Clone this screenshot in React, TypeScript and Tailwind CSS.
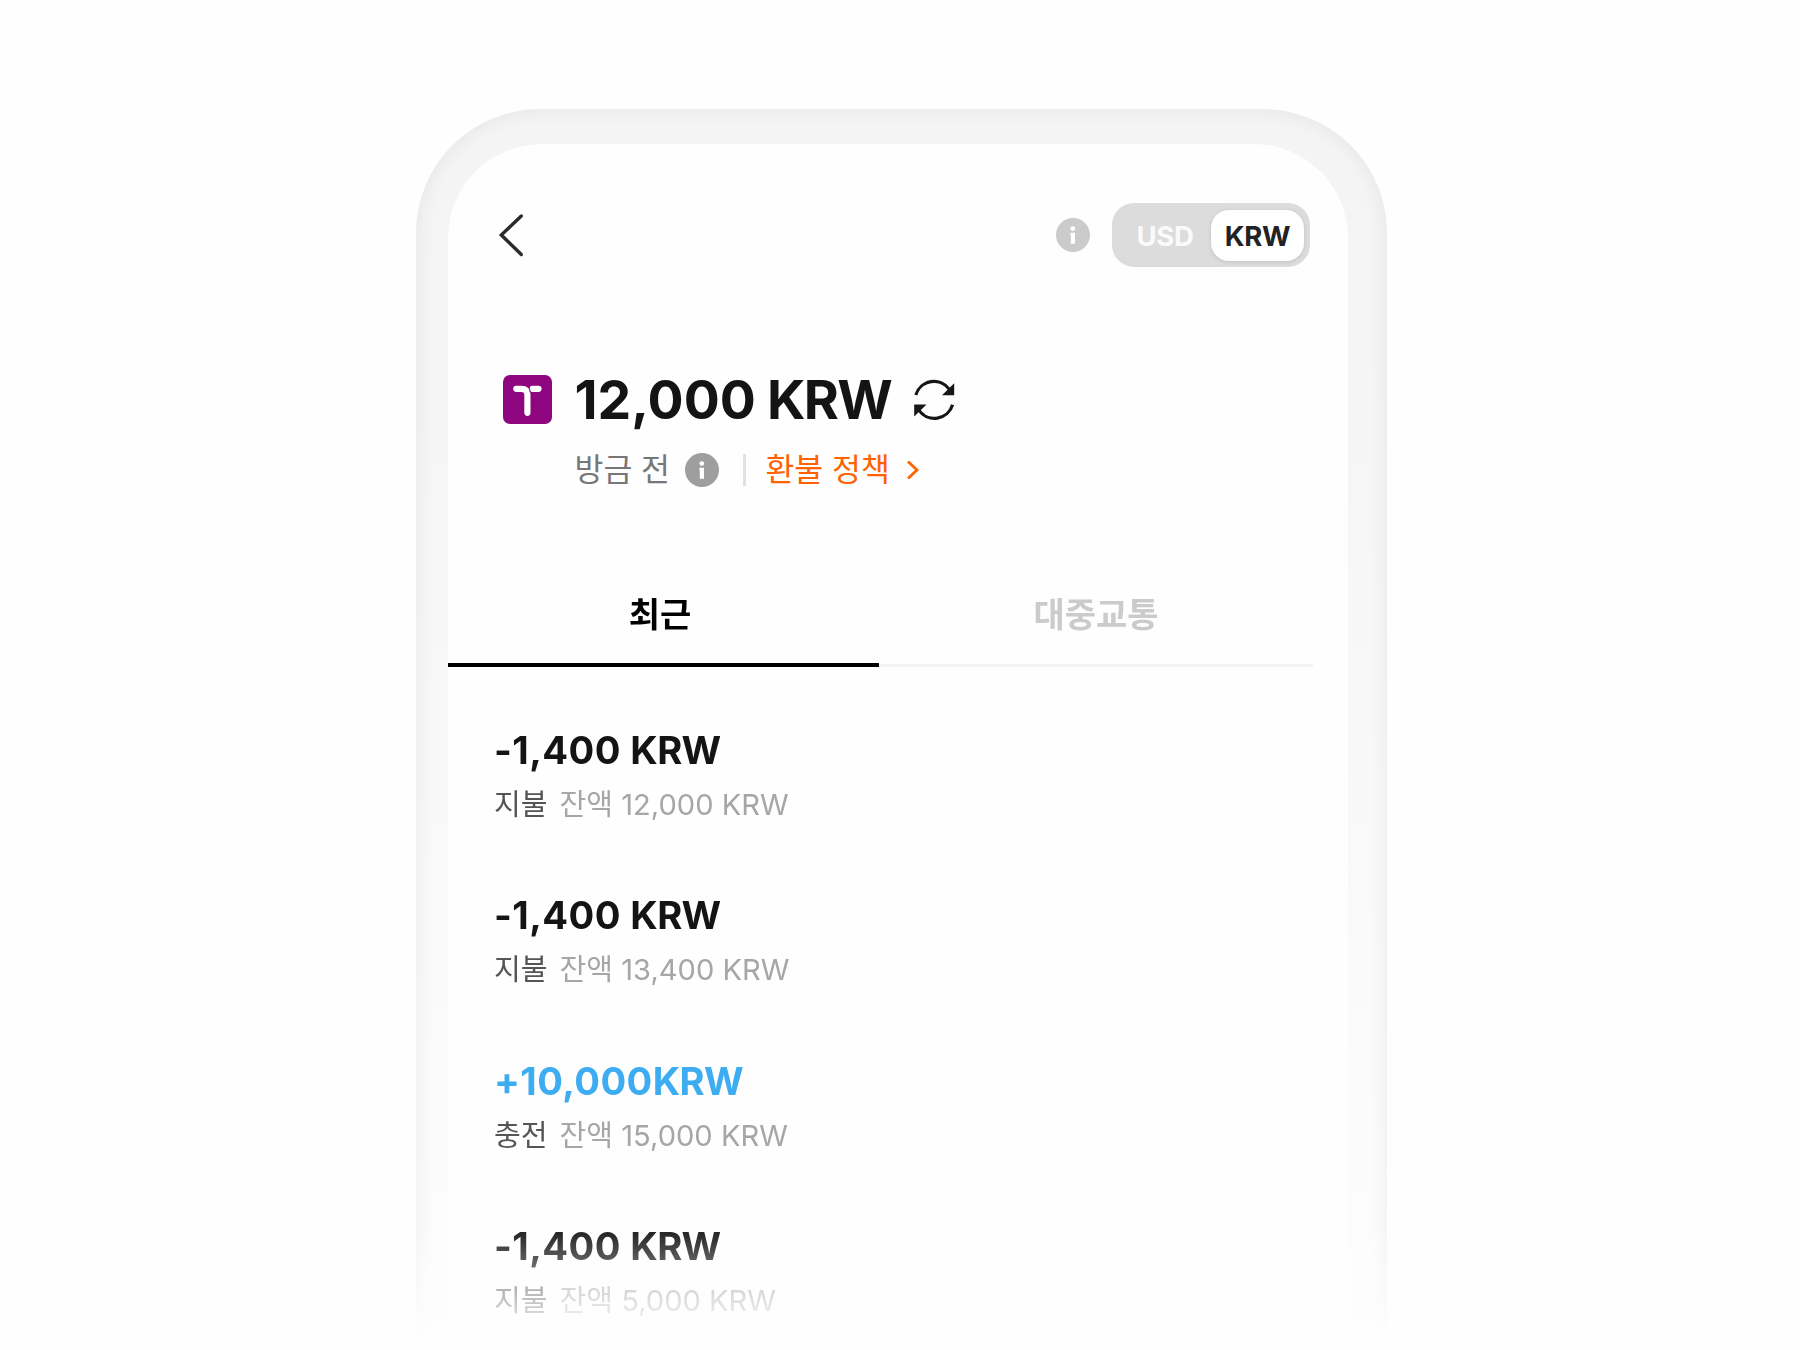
import { clsx } from "clsx";

type Transaction = {
  amount: string;
  kind: string;
  balance: string;
  isCharge?: boolean;
};

const transactions: Transaction[] = [
  { amount: "-1,400 ", kind: "지불", balance: "12,000 KRW" },
  { amount: "-1,400 ", kind: "지불", balance: "13,400 KRW" },
  { amount: "+10,000", kind: "충전", balance: "15,000 KRW", isCharge: true },
  { amount: "-1,400 ", kind: "지불", balance: "5,000 KRW" },
];

const InfoIcon = ({ className }: { className: string }) => (
  <svg
    viewBox="0 0 34 34"
    className={clsx("h-[34px] w-[34px] shrink-0", className)}
  >
    <circle cx="17" cy="17" r="17" fill="currentColor" />
    <circle cx="16.8" cy="10.6" r="2.4" fill="white" />
    <path d="M14.4 14.8h4.6v11h-4.2v-8.6h-.4z" fill="white" />
  </svg>
);

const Header = () => (
  <header className="flex items-center pt-[59px] pr-[38px] pl-12">
    <button aria-label="뒤로">
      <svg
        viewBox="0 0 28 44"
        className="h-[44px] w-[28px] text-[#2b2b2b]"
        fill="none"
        stroke="currentColor"
        strokeWidth="3.4"
        strokeLinecap="round"
      >
        <path d="M25.3 3 5.3 22l20 19.5" />
      </svg>
    </button>
    <InfoIcon className="ml-auto text-[#cbcbcb]" />
    <div className="ml-[22px] flex h-16 w-[198px] items-center rounded-[22px] bg-[#dcdcdc] pr-1.5 text-[27.5px] font-bold">
      <span className="flex-1 pt-[4px] pl-[7px] text-center tracking-[-0.3px] text-[#fafafa]">
        USD
      </span>
      <span className="flex h-[51px] w-[93px] items-center justify-center rounded-[18px] bg-white pt-[4px] tracking-[-0.3px] text-[#222] shadow-[0_1px_4px_rgba(0,0,0,0.12)]">
        KRW
      </span>
    </div>
  </header>
);

const Balance = () => (
  <section className="mt-[99px] flex pl-[54.5px]">
    <svg viewBox="0 0 49 49" className="mt-[9px] h-[49px] w-[49px]">
      <rect width="49" height="49" rx="7" fill="#8e0580" />
      <g
        fill="none"
        stroke="white"
        strokeWidth="6.2"
        strokeLinecap="round"
        strokeLinejoin="round"
      >
        <path d="M13.3 13.8h5.2q5.9 0 5.9 6v18" />
        <path d="M29.5 13.8h6" />
      </g>
      <path d="M25.2 10q1.6 2.6 2 7.4" stroke="#8e0580" fill="none" />
    </svg>
    <div className="ml-[23px]">
      <div className="flex h-[68px] items-center">
        <h1 className="text-[53.5px] font-bold tracking-[0px] [word-spacing:-1.5px] whitespace-nowrap text-[#141414]">
          12,000 <span className="tracking-[-1.7px]">KRW</span>
        </h1>
        <svg
          viewBox="0 0 42 42"
          className="ml-[22px] h-[42px] w-[42px] text-[#161616]"
        >
          <g fill="none" stroke="currentColor" strokeWidth="3.2">
            <path d="M2.8 16A19 19 0 0 1 36.6 10.6" />
            <path d="M39.6 25.8A19 19 0 0 1 5.8 31.2" />
          </g>
          <path d="M41.2 4.2v12H29z" fill="currentColor" />
          <path d="M1.2 37.6v-12h12.2z" fill="currentColor" />
        </svg>
      </div>
      <div className="mt-1 flex h-[64px] items-center text-[31.4px] whitespace-nowrap">
        <span className="pt-[2px] text-[#777]">방금 전</span>
        <InfoIcon className="ml-[15.5px] text-[#9e9e9e]" />
        <span className="ml-6 h-[32px] w-[3px] bg-[#e2e2e2]" />
        <span className="ml-[19px] pt-[2px] text-[#ff6200]">환불 정책</span>
        <svg
          viewBox="0 0 14 20"
          className="ml-[16px] h-[20px] w-[14px] text-[#ff6200]"
          fill="none"
          stroke="currentColor"
          strokeWidth="2.8"
        >
          <path d="m2 1.5 9 8.5-9 8.5" />
        </svg>
      </div>
    </div>
  </section>
);

const Tabs = () => (
  <nav className="mt-[74px] flex h-[91px] w-[865px] text-[34px] font-bold">
    <button className="h-full w-[431px] border-b-[4.5px] border-black pr-[7px] pb-2.5 text-black">
      최근
    </button>
    <button className="h-full flex-1 border-b-[3px] border-[#f4f4f4] pb-3 text-[#cbcbcb]">
      대중교통
    </button>
  </nav>
);

const TransactionRow = ({ amount, kind, balance, isCharge }: Transaction) => (
  <li className="h-[165.3px]">
    <p
      className={clsx(
        "h-[46px] text-[38.2px] leading-[46px] font-bold tracking-[0.4px] whitespace-pre",
        isCharge ? "text-[#3eacf0]" : "text-[#141414]",
      )}
    >
      {amount}
      <span className="tracking-[-0.6px]">KRW</span>
    </p>
    <p className="mt-[9px] flex h-[44px] gap-3 text-[29.1px] leading-[45px] whitespace-pre">
      <span className="text-[#555]">{kind}</span>
      <span className="text-[#a6a6a6]">잔액 {balance}</span>
    </p>
  </li>
);

const App = () => {
  return (
    <main className="h-[1350px] w-[1800px] overflow-hidden bg-[#fefefe] pt-[109px] pl-[416px] font-['Inter','Noto_Sans_CJK_KR',sans-serif]">
      <div className="h-[1241px] w-[971px] overflow-hidden [mask-image:linear-gradient(to_bottom,black_1115px,transparent_1232px)]">
        <div className="h-[1400px] rounded-t-[124px] bg-[linear-gradient(to_bottom,#f4f4f4,#f5f5f5_250px,#fcfcfc_1100px)] pt-[35px] pr-[39px] pl-8 shadow-[inset_0_0_20px_rgba(0,0,0,0.07)]">
          <div className="h-full rounded-t-[94px] bg-[#fefefe]">
            <Header />
            <Balance />
            <Tabs />
            <ul className="pt-[60px] pl-[46px]">
              {transactions.map((item, i) => (
                <TransactionRow key={i} {...item} />
              ))}
            </ul>
          </div>
        </div>
      </div>
    </main>
  );
};

export default App;
